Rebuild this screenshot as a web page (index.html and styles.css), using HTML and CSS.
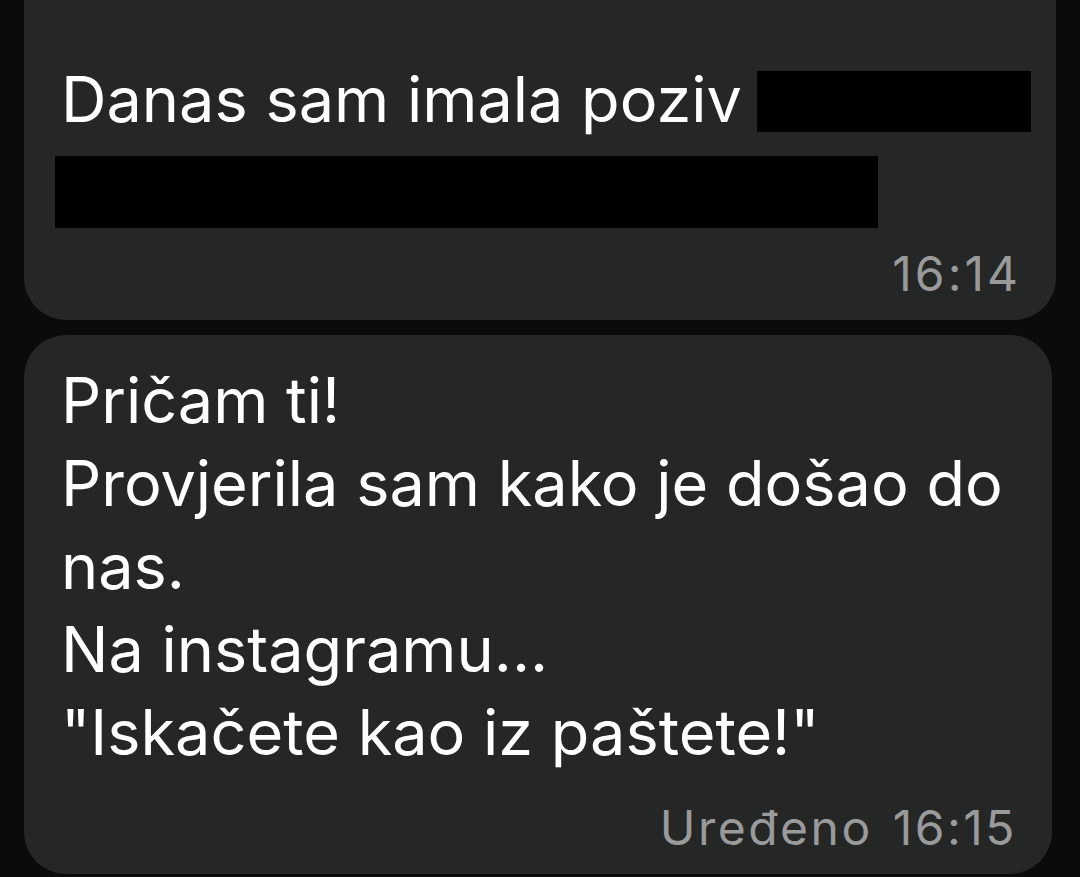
FILE: index.html
```html
<!DOCTYPE html>
<html lang="hr">
<head>
<meta charset="utf-8">
<title>Chat</title>
<link rel="stylesheet" href="styles.css">
</head>
<body>
<div class="chat">
  <div class="bubble bubble-first">
    <div class="line line-one"><span class="text">Danas sam imala poziv</span><span class="redact redact-a"></span></div>
    <div class="line line-two"><span class="redact redact-b"></span></div>
    <div class="meta">16:14</div>
  </div>
  <div class="bubble bubble-second">
    <div class="body">Pričam ti!<br>Provjerila sam kako je došao do nas.<br>Na instagramu...<br>"Iskačete kao iz paštete!"</div>
    <div class="meta">Uređeno 16:15</div>
  </div>
</div>
</body>
</html>
```

FILE: styles.css
```css
html, body {
  margin: 0;
  padding: 0;
  background: #0b0b0b;
  height: 100%;
  overflow: hidden;
}
.chat {
  display: flex;
  flex-direction: column;
  gap: 15px;
  padding: 0 24px;
  font-family: "Inter", "Roboto", sans-serif;
}
.bubble {
  background: #252626;
  border-radius: 42px;
  color: #ffffff;
  font-size: 63px;
  line-height: 83px;
  box-sizing: border-box;
}
.bubble-first {
  margin-top: -60px;
  padding: 118px 38px 18px 37px;
  border-top-left-radius: 0;
  border-top-right-radius: 0;
}
.bubble-second {
  margin-right: 4px;
  padding: 24px 38px 18px 37px;
}
.line {
  height: 83px;
  display: flex;
  align-items: flex-start;
}
.line-one .text {
  flex-shrink: 0;
  white-space: nowrap;
}
.line-one .redact-a {
  display: block;
  flex-shrink: 0;
  width: 274px;
  height: 61px;
  margin-left: 15px;
  margin-top: 13px;
  background: #000;
}
.line-two .redact-b {
  display: block;
  width: 823px;
  height: 72px;
  margin-left: -6px;
  margin-top: 15px;
  background: #000;
}
.body {
  width: 960px;
}
.meta {
  margin-top: 22px;
  text-align: right;
  font-size: 48px;
  line-height: 56px;
  color: #9a9a9a;
  letter-spacing: 3px;
  margin-right: -3px;
}
.bubble-second .meta {
  margin-top: 26px;
  letter-spacing: 2.5px;
  word-spacing: 4px;
}
```
